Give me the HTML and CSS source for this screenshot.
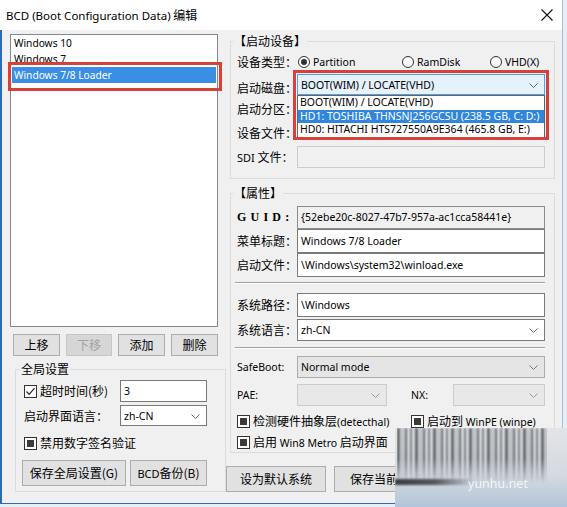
FILE: index.html
```html
<!DOCTYPE html>
<html lang="zh-CN">
<head>
<meta charset="utf-8">
<title>BCD 编辑</title>
<link rel="stylesheet" href="styles.css">
</head>
<body>
<div class="window">
  <div class="titlebar">
    <span class="title"><span class="lat-t">BCD (Boot Configuration Data)</span> 编辑</span>
    <svg class="close" width="12" height="12" viewBox="0 0 12 12"><path d="M0.5 0.5L11.5 11.5M11.5 0.5L0.5 11.5" stroke="#111" stroke-width="1.1" fill="none"/></svg>
  </div>
  <div class="client">
    <div class="leftcol">
      <div class="listbox">
        <div class="item lat">Windows 10</div>
        <div class="item lat">Windows 7</div>
        <div class="item lat sel">Windows 7/8 Loader</div>
        <div class="mark mark-list"></div>
      </div>
      <div class="btnrow">
        <button class="btn b47">上移</button>
        <button class="btn b46 disabled">下移</button>
        <button class="btn b47">添加</button>
        <button class="btn b47">删除</button>
      </div>
      <fieldset class="group g-global">
        <legend>全局设置</legend>
        <div class="grow gr1">
          <label class="chk-line lblw"><span class="check on"><svg width="11" height="11" viewBox="0 0 11 11"><path d="M1.5 5.5L4.2 8.3L9.5 2.2" stroke="#222" stroke-width="1.2" fill="none"/></svg></span><span>超时时间(秒)</span></label>
          <div class="edit small"><span class="lat">3</span></div>
        </div>
        <div class="grow gr2">
          <span class="lblw">启动界面语言：</span>
          <div class="edit small combo-w"><span class="lat">zh-CN</span><svg class="chev" width="9" height="5" viewBox="0 0 9 5"><path d="M0.5 0.5L4.5 4.5L8.5 0.5" stroke="#666" fill="none"/></svg></div>
        </div>
        <div class="grow gr3">
          <label class="chk-line"><span class="check ind"><b></b></span><span>禁用数字签名验证</span></label>
        </div>
        <div class="grow gr4">
          <button class="btn big b104">保存全局设置(G)</button>
          <button class="btn big b77"><span class="lat-b">BCD</span>备份(B)</button>
        </div>
      </fieldset>
    </div>

    <div class="rightcol">
      <fieldset class="group g-dev">
        <legend>【启动设备】</legend>
        <div class="row h24">
          <span class="lbl">设备类型：</span>
          <div class="radios">
            <label class="radio on"><i></i><span class="lat">Partition</span></label>
            <label class="radio"><i></i><span class="lat">RamDisk</span></label>
            <label class="radio"><i></i><span class="lat">VHD(X)</span></label>
          </div>
        </div>
        <div class="row h23 top">
          <span class="lbl lbl-low">启动磁盘：</span>
          <div class="combo focus">
            <span class="lat">BOOT(WIM) / LOCATE(VHD)</span>
            <svg class="chev" width="9" height="5" viewBox="0 0 9 5"><path d="M0.5 0.5L4.5 4.5L8.5 0.5" stroke="#666" fill="none"/></svg>
            <div class="droplist">
              <div class="opt lat">BOOT(WIM) / LOCATE(VHD)</div>
              <div class="opt lat hl">HD1: TOSHIBA THNSNJ256GCSU (238.5 GB, C: D:)</div>
              <div class="opt lat">HD0: HITACHI HTS727550A9E364 (465.8 GB, E:)</div>
            </div>
            <div class="mark mark-combo"></div>
          </div>
        </div>
        <div class="row h24">
          <span class="lbl">启动分区：</span>
        </div>
        <div class="row h24">
          <span class="lbl">设备文件：</span>
        </div>
        <div class="row h24">
          <span class="lbl"><span class="lat-b">SDI</span> 文件：</span>
          <div class="edit wide disabled-box"></div>
        </div>
      </fieldset>

      <fieldset class="group g-prop">
        <legend>【属性】</legend>
        <div class="row h24 pt">
          <span class="lbl guid">GUID:</span>
          <div class="edit wide ro"><span class="lat">{52ebe20c-8027-47b7-957a-ac1cca58441e}</span></div>
        </div>
        <div class="row h24">
          <span class="lbl">菜单标题：</span>
          <div class="edit wide"><span class="lat">Windows 7/8 Loader</span></div>
        </div>
        <div class="row h24">
          <span class="lbl">启动文件：</span>
          <div class="edit wide"><span class="lat">\Windows\system32\winload.exe</span></div>
        </div>
        <div class="sep sep1"></div>
        <div class="row h24 mt9">
          <span class="lbl">系统路径：</span>
          <div class="edit wide tall"><span class="lat">\Windows</span></div>
        </div>
        <div class="row h22 mt2">
          <span class="lbl">系统语言：</span>
          <div class="edit wide combo-w"><span class="lat">zh-CN</span><svg class="chev" width="9" height="5" viewBox="0 0 9 5"><path d="M0.5 0.5L4.5 4.5L8.5 0.5" stroke="#666" fill="none"/></svg></div>
        </div>
        <div class="sep sep2"></div>
        <div class="row h22 mt7">
          <span class="lbl lat-s">SafeBoot:</span>
          <div class="edit wide dd"><span class="lat">Normal mode</span><svg class="chev" width="9" height="5" viewBox="0 0 9 5"><path d="M0.5 0.5L4.5 4.5L8.5 0.5" stroke="#777" fill="none"/></svg></div>
        </div>
        <div class="row h22 mt6">
          <span class="lbl lat-s">PAE:</span>
          <div class="edit dd-off pae"><svg class="chev" width="9" height="5" viewBox="0 0 9 5"><path d="M0.5 0.5L4.5 4.5L8.5 0.5" stroke="#9a9a9a" fill="none"/></svg></div>
          <span class="lbl-nx lat-s">NX:</span>
          <div class="edit dd-off nx"><svg class="chev" width="9" height="5" viewBox="0 0 9 5"><path d="M0.5 0.5L4.5 4.5L8.5 0.5" stroke="#9a9a9a" fill="none"/></svg></div>
        </div>
        <div class="row h22 mt4 checks">
          <label class="chk-line c-hal"><span class="check ind"><b></b></span><span>检测硬件抽象层<span class="lat">(detecthal)</span></span></label>
          <label class="chk-line"><span class="check ind"><b></b></span><span>启动到 <span class="lat">WinPE (winpe)</span></span></label>
        </div>
        <div class="row h20">
          <label class="chk-line"><span class="check ind"><b></b></span><span>启用 <span class="lat">Win8 Metro</span> 启动界面</span></label>
        </div>
      </fieldset>

      <div class="bottombtns">
        <button class="btn big b100">设为默认系统</button>
        <button class="btn big b128">保存当前系统设置</button>
      </div>
    </div>
  </div>
</div>

<div class="watermark">
  <div class="wm-bars"></div>
  <div class="wm-streak"></div>
  <span class="wm-text">yunhu.net</span>
</div>
</body>
</html>
```

FILE: styles.css
```css
* { box-sizing: border-box; }

html, body { margin: 0; padding: 0; }

body {
  width: 567px;
  height: 507px;
  overflow: hidden;
  position: relative;
  background: #e6eef6;
  font-family: "Noto Sans CJK SC", sans-serif;
  font-size: 12px;
  line-height: 16px;
  color: #000;
}

.lat, .lat-t, .lat-b, .lat-s {
  font-family: "Noto Sans", "Noto Sans CJK SC", sans-serif;
}
.lat { font-size: 10.5px; }
.lat-b { font-size: 11px; }
.lat-s { font-size: 10.5px; }
.lat-t { font-size: 11.5px; }

/* ---------- window frame ---------- */
.window {
  width: 563px;
  height: 504px;
  background: #f0f0f0;
  border-right: 1px solid #a8bfd6;
  border-bottom: 1px solid #2d6db0;
  display: flex;
  flex-direction: column;
}

.titlebar {
  height: 30px;
  flex: none;
  background: #fff;
  display: flex;
  align-items: center;
  justify-content: space-between;
  padding: 0 9px 0 6px;
}
.title { font-size: 12px; }
.close { display: block; margin-top: -1px; }

.client {
  flex: 1;
  display: flex;
  border-left: 2px solid #2b6cb0;
  padding: 4px 0 0 8px;
}

/* ---------- left column ---------- */
.leftcol {
  width: 218px;
  flex: none;
  display: flex;
  flex-direction: column;
}

.listbox {
  position: relative;
  width: 208px;
  height: 293px;
  background: #fff;
  border: 1px solid #828790;
}
.item {
  height: 16px;
  line-height: 16px;
  padding-left: 2px;
  margin: 0 1px;
  font-size: 10.2px;
}
.item.sel { background: #3a8ee6; color: #fff; }

.mark {
  position: absolute;
  border: 3px solid #d8413a;
  pointer-events: none;
}
.mark-list { left: -3px; top: 27px; width: 214px; height: 29px; }

.btnrow {
  display: flex;
  gap: 6px;
  margin: 7px 0 0 3px;
}

.btn {
  height: 22px;
  padding: 0;
  background: #e1e1e1;
  border: 1px solid #adadad;
  font-family: "Noto Sans CJK SC", sans-serif;
  font-size: 12px;
  color: #000;
  line-height: 18px;
}
.btn.disabled { background: #d6d6d6; border-color: #c6c6c6; color: #a3a3a3; }
.btn.big { height: 26px; }
.b47 { width: 47px; }
.b46 { width: 46px; }
.b104 { width: 104px; }
.b77 { width: 77px; }
.b100 { width: 100px; }
.b128 { width: 128px; }

/* ---------- group boxes ---------- */
.group {
  margin: 0;
  min-width: 0;
  border: 1px solid #dcdcdc;
}
.group legend {
  padding: 0 1px;
  line-height: 16px;
  font-size: 12px;
}

.g-global {
  width: 211px;
  margin: 5px 0 0 5px;
  padding: 0 6px 5px 8px;
}
.g-global legend { margin-left: -4px; }

.grow { display: flex; align-items: center; }
.gr1 { height: 22px; margin-top: 3px; }
.gr2 { height: 21px; margin-top: 3px; }
.gr3 { height: 20px; margin-top: 7px; }
.gr4 { height: 26px; margin-top: 7px; margin-left: -2px; gap: 4px; }
.lblw { width: 96px; flex: none; }

.chk-line { display: flex; align-items: center; white-space: nowrap; }
.check {
  width: 13px;
  height: 13px;
  flex: none;
  border: 1px solid #333;
  background: #fff;
  margin-right: 3px;
  display: flex;
  align-items: center;
  justify-content: center;
}
.check svg { display: block; }
.check.ind b {
  display: block;
  width: 7px;
  height: 7px;
  background: #3a3a3a;
}

.edit {
  position: relative;
  height: 100%;
  background: #fff;
  border: 1px solid #7a7a7a;
  display: flex;
  align-items: center;
  padding-left: 3px;
}
.edit.small { width: 87px; }
.edit.wide { width: 248px; }
.edit.tall { height: 24px; }
.edit .chev { position: absolute; right: 6px; top: 50%; margin-top: -2px; }
.combo-w { border-color: #7a7a7a; }
.edit.ro { height: 23px; background: #f0f0f0; border-color: #8c8c8c; }
.edit.disabled-box { height: 22px; background: #f0f0f0; border-color: #cccccc; }
.edit.dd { background: #e5e5e5; border-color: #acacac; }
.edit.dd-off { background: #e8e8e8; border-color: #cccccc; }

/* ---------- right column ---------- */
.rightcol {
  width: 330px;
  flex: none;
  display: flex;
  flex-direction: column;
}

.g-dev, .g-prop {
  width: 325px;
  margin-left: 2px;
  padding: 2px 9px 9px 6px;
}
.g-dev legend, .g-prop legend { margin-left: -4px; line-height: 14px; }
.g-prop { margin-top: 7px; padding-top: 0; padding-bottom: 0; }

.row { display: flex; align-items: center; }
.row.top { align-items: flex-start; }
.h24 { height: 24px; }
.h23 { height: 23px; }
.h22 { height: 22px; }
.h20 { height: 20px; }
.pt { margin-top: 5px; }
.mt9 { margin-top: 9px; }
.mt7 { margin-top: 7px; }
.mt6 { margin-top: 6px; }
.mt4 { margin-top: 4px; }
.mt2 { margin-top: 2px; }

.lbl { width: 60px; flex: none; white-space: nowrap; }
.lbl-low { margin-top: 6px; }
.guid {
  font-family: "Liberation Serif", serif;
  font-weight: bold;
  font-size: 12px;
  letter-spacing: 4.2px;
}

.radios {
  display: grid;
  grid-template-columns: 104px 88px 56px;
  width: 248px;
}
.radio { display: flex; align-items: center; margin-left: 1px; }
.radio i {
  width: 12px;
  height: 12px;
  border: 1px solid #333;
  border-radius: 50%;
  background: #fff;
  margin-right: 3px;
  display: flex;
  align-items: center;
  justify-content: center;
}
.radio.on i::after {
  content: "";
  width: 6px;
  height: 6px;
  border-radius: 50%;
  background: #333;
}

.combo {
  position: relative;
  width: 248px;
  height: 21px;
  background: #e5f1fb;
  border: 1px solid #569de5;
  display: flex;
  align-items: center;
  padding-left: 3px;
}
.combo .chev { position: absolute; right: 6px; top: 50%; margin-top: -2px; }

.droplist {
  position: absolute;
  left: -1px;
  top: 20px;
  width: 248px;
  background: #fff;
  border: 1px solid #646464;
  z-index: 2;
}
.opt { height: 13.5px; line-height: 13.5px; padding-left: 2px; white-space: nowrap; }
.opt.hl { background: #2f86dc; color: #fff; }

.mark-combo { left: -5px; top: -5px; width: 256px; height: 70px; z-index: 3; }

.sep {
  height: 2px;
  width: 310px;
  border-top: 1px solid #a0a0a0;
  border-bottom: 1px solid #fff;
}
.sep1 { margin-top: 5px; margin-left: -2px; }
.sep2 { margin-top: 6px; margin-left: -2px; }

.pae { width: 90px; }
.nx { width: 92px; }
.lbl-nx { width: 66px; padding-left: 24px; flex: none; }

.checks { gap: 0; }
.c-hal { width: 174px; }

.bottombtns {
  display: flex;
  gap: 8px;
  margin: 13px 0 0 -2px;
}

/* ---------- watermark overlay ---------- */
.watermark {
  position: absolute;
  left: 395px;
  top: 428px;
  width: 172px;
  height: 79px;
  overflow: hidden;
  pointer-events: none;
  background: linear-gradient(180deg, rgba(226,228,231,0.96) 0%, rgba(212,217,224,0.97) 60%, rgba(178,197,217,1) 100%);
}
.wm-bars {
  position: absolute;
  left: 2px;
  top: 0;
  width: 150px;
  height: 56px;
  background:
    repeating-linear-gradient(90deg,
      #3a3d42 0 3px, transparent 3px 5px,
      #686c72 5px 6px, transparent 6px 8px,
      #34373c 8px 10px, transparent 10px 13px,
      #53565c 13px 15px, transparent 15px 18px);
  filter: blur(0.8px);
  opacity: 0.78;
  -webkit-mask-image: linear-gradient(180deg, #000 0%, #000 55%, transparent 100%);
  mask-image: linear-gradient(180deg, #000 0%, #000 55%, transparent 100%);
}
.wm-streak {
  position: absolute;
  left: 0;
  top: 51px;
  width: 80px;
  height: 6px;
  background: linear-gradient(90deg, #3a3d42 0%, #55595f 50%, rgba(120,125,130,0) 100%);
  filter: blur(0.8px);
}
.wm-text {
  position: absolute;
  left: 73px;
  top: 48px;
  font-family: "Noto Sans", sans-serif;
  font-size: 12.5px;
  color: #f2f5f8;
  filter: blur(0.4px);
}
```
